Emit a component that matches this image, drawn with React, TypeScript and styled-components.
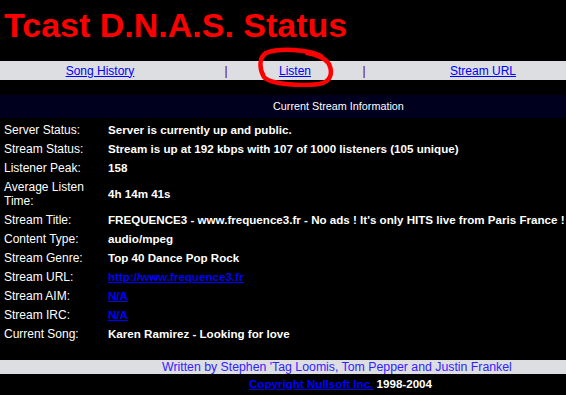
import React from 'react';
import styled, { createGlobalStyle } from 'styled-components';

const GlobalStyle = createGlobalStyle`
  html, body {
    margin: 0;
    padding: 0;
    background: #000000;
  }
  body {
    font-family: "Liberation Sans", Arial, sans-serif;
    color: #ffffff;
    overflow: hidden;
  }
`;

const Page = styled.div`
  width: 566px;
  height: 395px;
  background: #000000;
  overflow: hidden;
`;

const Title = styled.h1`
  margin: 0;
  padding: 6px 0 0 4px;
  height: 54px;
  box-sizing: border-box;
  font-size: 34px;
  font-weight: bold;
  color: #ff0000;
  line-height: 38px;
  white-space: nowrap;
`;

const NavBar = styled.div`
  position: relative;
  display: grid;
  grid-template-columns: 200px 52px 86px 52px 176px;
  align-items: center;
  height: 19px;
  margin-top: 7px;
  background: #dddee2;
  font-size: 12px;
`;

const NavCell = styled.div<{ $shift?: number }>`
  text-align: center;
  color: #660033;
  padding-left: ${(p) => p.$shift ?? 0}px;
`;

const NavLink = styled.a`
  color: #0000ff;
  text-decoration: underline;
`;

const Circle = styled.svg`
  position: absolute;
  left: 257px;
  top: -14px;
  width: 78px;
  height: 40px;
  pointer-events: none;
`;

const Header = styled.div`
  margin-top: 15px;
  height: 23px;
  background: #00001e;
  font-size: 10.8px;
  line-height: 23px;
  padding-left: 273px;
`;

const Info = styled.div`
  display: grid;
  grid-template-columns: 104px 1fr;
  row-gap: 5px;
  padding: 5px 0 0 4px;
  font-size: 12px;
  line-height: 14px;
`;

const Label = styled.div`
  color: #ffffff;
`;

const Value = styled.div<{ $center?: boolean }>`
  font-weight: bold;
  font-size: 11.6px;
  white-space: nowrap;
  align-self: ${(p) => (p.$center ? 'center' : 'start')};
`;

const ValueLink = styled.a`
  color: #0000ff;
  text-decoration: underline;
`;

const Credits = styled.div`
  margin-top: 19px;
  height: 14px;
  background: #dddee2;
  font-size: 12.3px;
  line-height: 14px;
  color: #3322ff;
  padding-left: 162px;
  white-space: nowrap;
`;

const Copyright = styled.div`
  padding: 2px 0 0 249px;
  font-size: 11.6px;
  line-height: 15px;
  font-weight: bold;
  white-space: nowrap;
`;

const rows: { label: string; value: string; link?: boolean; center?: boolean }[] = [
  { label: 'Server Status:', value: 'Server is currently up and public.' },
  { label: 'Stream Status:', value: 'Stream is up at 192 kbps with 107 of 1000 listeners (105 unique)' },
  { label: 'Listener Peak:', value: '158' },
  { label: 'Average Listen Time:', value: '4h 14m 41s', center: true },
  { label: 'Stream Title:', value: "FREQUENCE3 - www.frequence3.fr - No ads ! It's only HITS live from Paris France !" },
  { label: 'Content Type:', value: 'audio/mpeg' },
  { label: 'Stream Genre:', value: 'Top 40 Dance Pop Rock' },
  { label: 'Stream URL:', value: 'http://www.frequence3.fr', link: true },
  { label: 'Stream AIM:', value: 'N/A', link: true },
  { label: 'Stream IRC:', value: 'N/A', link: true },
  { label: 'Current Song:', value: 'Karen Ramirez - Looking for love' },
];

export default function App() {
  return (
    <Page>
      <GlobalStyle />
      <Title>Tcast D.N.A.S. Status</Title>
      <NavBar>
        <NavCell>
          <NavLink href="#">Song History</NavLink>
        </NavCell>
        <NavCell>|</NavCell>
        <NavCell>
          <NavLink href="#">Listen</NavLink>
        </NavCell>
        <NavCell>|</NavCell>
        <NavCell $shift={10}>
          <NavLink href="#">Stream URL</NavLink>
        </NavCell>
        <Circle viewBox="0 0 78 40">
          <path
            d="M64 9 C50 2 22 1 9 6 C2 10 2 22 7 30 C14 38 46 39 62 37 C74 35 76 26 72 17 C68 11 58 7 50 6"
            fill="none"
            stroke="#ff0000"
            strokeWidth="4.5"
            strokeLinecap="round"
          />
        </Circle>
      </NavBar>
      <Header>Current Stream Information</Header>
      <Info>
        {rows.map((r) => (
          <React.Fragment key={r.label}>
            <Label>{r.label}</Label>
            <Value $center={r.center}>
              {r.link ? <ValueLink href="#">{r.value}</ValueLink> : r.value}
            </Value>
          </React.Fragment>
        ))}
      </Info>
      <Credits>Written by Stephen 'Tag Loomis, Tom Pepper and Justin Frankel</Credits>
      <Copyright>
        <ValueLink href="#">Copyright Nullsoft Inc.</ValueLink> 1998-2004
      </Copyright>
    </Page>
  );
}
